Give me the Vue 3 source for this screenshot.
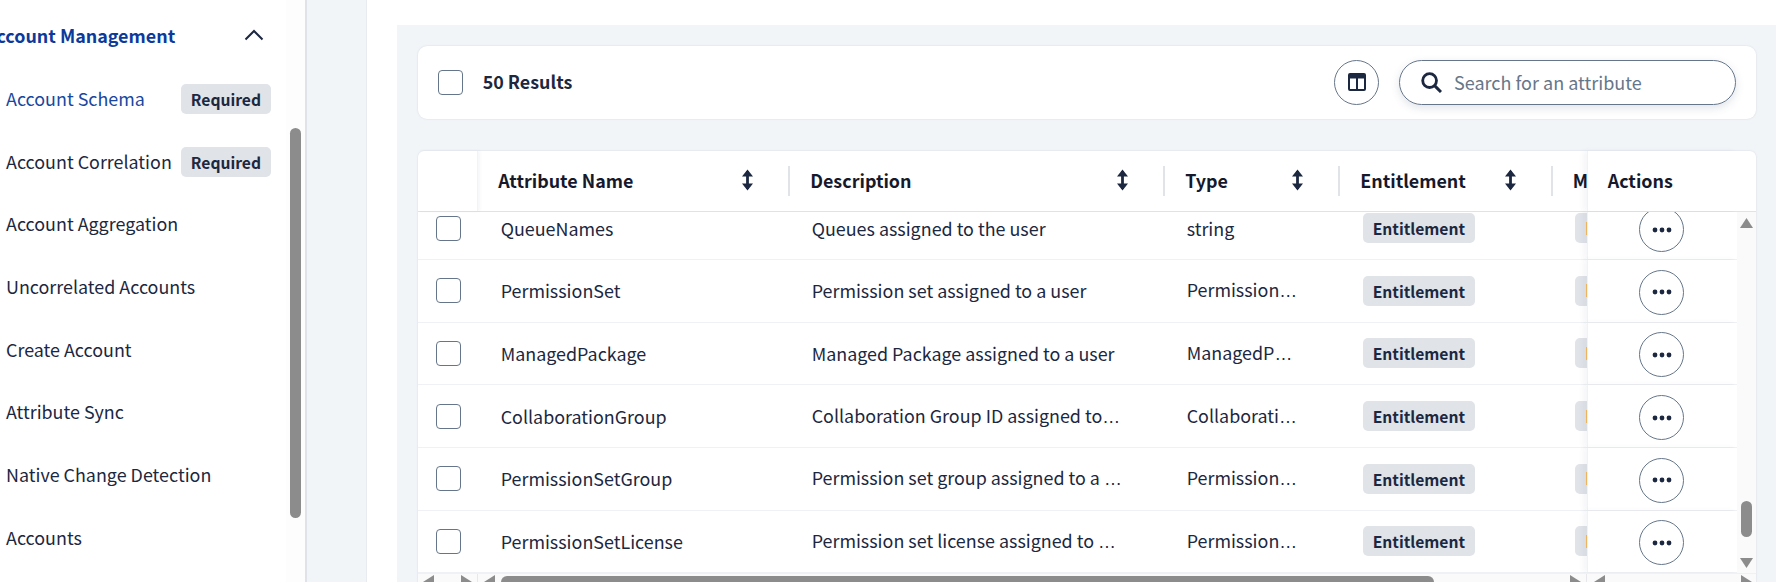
<script setup>
// Menu de la izquierda
const menuItems = [
  { name: 'Account Schema', required: true, active: true },
  { name: 'Account Correlation', required: true },
  { name: 'Account Aggregation' },
  { name: 'Uncorrelated Accounts' },
  { name: 'Create Account' },
  { name: 'Attribute Sync' },
  { name: 'Native Change Detection' },
  { name: 'Accounts' }
]

const columns = ['Attribute Name', 'Description', 'Type', 'Entitlement']

// cut = texto recortado, se pinta con puntos suspensivos
const rows = [
  { name: 'QueueNames', description: 'Queues assigned to the user', type: 'string' },
  { name: 'PermissionSet', description: 'Permission set assigned to a user', type: 'Permission', typeCut: true },
  { name: 'ManagedPackage', description: 'Managed Package assigned to a user', type: 'ManagedP', typeCut: true },
  { name: 'CollaborationGroup', description: 'Collaboration Group ID assigned to', descCut: true, type: 'Collaborati', typeCut: true },
  { name: 'PermissionSetGroup', description: 'Permission set group assigned to a ', descCut: true, type: 'Permission', typeCut: true },
  { name: 'PermissionSetLicense', description: 'Permission set license assigned to ', descCut: true, type: 'Permission', typeCut: true }
]
</script>

<template>
  <div class="page">
    <!-- Menu lateral -->
    <aside class="sidebar">
      <div class="menu">
        <div class="menu-head">
          <span class="menu-title">Account Management</span>
          <svg class="chevron" width="20" height="12" viewBox="0 0 20 12">
            <path d="M1.5 10.5 10 2l8.5 8.5" fill="none" stroke="#1c2740" stroke-width="2" />
          </svg>
        </div>
        <div
          v-for="item in menuItems"
          :key="item.name"
          class="menu-item"
          :class="{ active: item.active }"
        >
          <span>{{ item.name }}</span>
          <span v-if="item.required" class="badge menu-badge">Required</span>
        </div>
      </div>
      <div class="menu-rail">
        <div class="menu-thumb"></div>
      </div>
    </aside>

    <div class="gutter"></div>

    <main class="content">
      <div class="panel">
        <!-- Barra de resultados -->
        <div class="toolbar">
          <span class="checkbox"></span>
          <span class="results">50 Results</span>
          <button class="round-btn columns-btn">
            <svg width="18" height="18" viewBox="0 0 18 18">
              <path d="M2 1h14a1 1 0 0 1 1 1v14a1 1 0 0 1-1 1H2a1 1 0 0 1-1-1V2a1 1 0 0 1 1-1z" fill="none" stroke="#1c2740" stroke-width="2" />
              <path d="M1 1h16v4.5H1z" fill="#1c2740" />
              <path d="M9 5v12" stroke="#1c2740" stroke-width="2" />
            </svg>
          </button>
          <div class="search">
            <svg width="21" height="21" viewBox="0 0 21 21">
              <circle cx="8.6" cy="8.6" r="6.9" fill="none" stroke="#1c2740" stroke-width="2.8" />
              <path d="M13.6 13.6 20 20" stroke="#1c2740" stroke-width="3" />
            </svg>
            <span class="placeholder">Search for an attribute</span>
          </div>
        </div>

        <!-- Tabla de atributos -->
        <div class="table">
          <div class="table-row table-head">
            <div class="select-head"></div>
            <div v-for="col in columns" :key="col" class="head-cell">
              <span>{{ col }}</span>
              <svg class="sort" width="13" height="24" viewBox="0 0 13 24">
                <path d="M6.5 3v18" stroke="#1c2740" stroke-width="2.8" />
                <path d="M1 8.6 6.5 1.6 12 8.6zM1 15.4 6.5 22.4 12 15.4z" fill="#1c2740" />
              </svg>
            </div>
            <div class="head-cell cut">M</div>
            <div class="head-cell actions-head">Actions</div>
            <div class="bar-corner"></div>
          </div>

          <div class="table-main">
            <div class="table-body">
              <div v-for="row in rows" :key="row.name" class="table-row body-row">
                <div class="select-cell"><span class="checkbox"></span></div>
                <div class="cell text-cell name-cell">{{ row.name }}</div>
                <div class="cell text-cell desc-cell">{{ row.description }}<span v-if="row.descCut" class="dots">…</span></div>
                <div class="cell text-cell type-cell">{{ row.type }}<span v-if="row.typeCut" class="dots">…</span></div>
                <div class="cell ent-cell"><span class="badge">Entitlement</span></div>
                <div class="cell cut-cell"><span class="cut-badge"><i></i></span></div>
                <div class="actions-cell">
                  <button class="round-btn dots-btn">
                    <svg width="20" height="6" viewBox="0 0 20 6">
                      <circle cx="3" cy="3" r="2.4" fill="#1c2740" />
                      <circle cx="10" cy="3" r="2.4" fill="#1c2740" />
                      <circle cx="17" cy="3" r="2.4" fill="#1c2740" />
                    </svg>
                  </button>
                </div>
              </div>
            </div>
            <!-- Scroll vertical -->
            <div class="v-scroll">
              <svg class="v-up" width="13" height="10" viewBox="0 0 13 10"><path d="M6.5 0 13 10H0z" fill="#8c8c8c" /></svg>
              <div class="v-thumb"></div>
              <svg class="v-down" width="13" height="10" viewBox="0 0 13 10"><path d="M0 0h13L6.5 10z" fill="#8c8c8c" /></svg>
            </div>
          </div>

          <!-- Scroll horizontal -->
          <div class="h-scroll">
            <div class="h-part h-select">
              <svg width="11" height="14" viewBox="0 0 11 14"><path d="M11 0v14L0 7z" fill="#8c8c8c" /></svg>
              <svg width="11" height="14" viewBox="0 0 11 14"><path d="M0 0v14l11-7z" fill="#8c8c8c" /></svg>
            </div>
            <div class="h-part h-middle">
              <svg width="11" height="14" viewBox="0 0 11 14"><path d="M11 0v14L0 7z" fill="#8c8c8c" /></svg>
              <div class="h-thumb"></div>
              <svg class="h-end" width="11" height="14" viewBox="0 0 11 14"><path d="M0 0v14l11-7z" fill="#8c8c8c" /></svg>
            </div>
            <div class="h-part h-actions">
              <svg width="11" height="14" viewBox="0 0 11 14"><path d="M11 0v14L0 7z" fill="#8c8c8c" /></svg>
              <svg class="h-end" width="11" height="14" viewBox="0 0 11 14"><path d="M0 0v14l11-7z" fill="#8c8c8c" /></svg>
            </div>
          </div>
        </div>
      </div>
    </main>
  </div>
</template>

<style>
html, body {
  margin: 0;
  background: #fff;
}
</style>

<style scoped>
.page {
  display: flex;
  width: 1776px;
  height: 582px;
  overflow: hidden;
  background: #fff;
  color: #1c2740;
  font-family: "Noto Sans CJK SC", "Liberation Sans", sans-serif;
  font-size: 17.9px;
  line-height: 24px;
}

/* Menu lateral */
.sidebar {
  display: flex;
  flex: 0 0 305px;
  background: #fff;
  border-right: 2px solid #dfe2e9;
}

.menu {
  flex: 0 0 286px;
  padding-top: 4px;
}

.menu-head {
  display: flex;
  align-items: center;
  height: 62.67px;
  margin-left: -15px;
}

.menu-title {
  font-weight: 700;
  color: #0b3a9b;
  white-space: nowrap;
}

.chevron {
  margin-left: auto;
  margin-right: 22px;
}

.menu-item {
  display: flex;
  align-items: center;
  justify-content: space-between;
  height: 62.67px;
  padding: 0 15px 0 6px;
}

.menu-item.active {
  color: #18479f;
}

.badge {
  display: inline-block;
  height: 30px;
  padding: 0 10px;
  border-radius: 5px;
  background: #e0e3e8;
  color: #1c2740;
  font-size: 15.65px;
  font-weight: 700;
  line-height: 31px;
  white-space: nowrap;
}

.menu-badge {
  margin-top: 2px;
}

.menu-rail {
  flex: 1;
  background: #fdfdfd;
}

.menu-thumb {
  width: 11px;
  height: 390px;
  margin: 128px 0 0 4px;
  border-radius: 6px;
  background: #8c8c8c;
}

.gutter {
  flex: 0 0 59px;
  background: #f2f5f8;
  border-right: 1px solid #e8ebef;
}

/* Contenido */
.content {
  flex: 1;
  min-width: 0;
  padding: 25px 0 0 30px;
}

.panel {
  height: 100%;
  padding: 20.7px 20px 0 20.7px;
  background: #f2f5f8;
}

.toolbar {
  display: flex;
  align-items: center;
  height: 73.4px;
  padding: 0 20px 0 20px;
  margin-bottom: 31.6px;
  background: #fff;
  border-radius: 9px;
  box-shadow: 0 0 2px rgba(60, 80, 110, 0.18);
  box-sizing: border-box;
}

.checkbox {
  display: block;
  flex: none;
  width: 25px;
  height: 25px;
  box-sizing: border-box;
  border: 1px solid #66768a;
  border-radius: 4px;
  background: #fff;
}

.results {
  margin: -2px 0 0 20px;
  font-weight: 700;
}

.round-btn {
  display: flex;
  align-items: center;
  justify-content: center;
  width: 45px;
  height: 45px;
  padding: 0;
  background: #fff;
  border: 1px solid #66768a;
  border-radius: 50%;
  box-sizing: border-box;
}

.columns-btn {
  margin-left: auto;
}

.search {
  display: flex;
  align-items: center;
  width: 337px;
  height: 45px;
  margin-left: 20px;
  padding-left: 21px;
  box-sizing: border-box;
  border: 1px solid #66768a;
  border-radius: 23px;
  box-shadow: 0 3px 8px rgba(60, 80, 110, 0.16);
}

.placeholder {
  margin: -1px 0 0 12px;
  color: #66768a;
  font-size: 18px;
}

/* Tabla */
.table {
  background: #fff;
  border-radius: 6px 6px 0 0;
  box-shadow: 0 0 2px rgba(60, 80, 110, 0.18);
}

.table-row {
  display: grid;
  grid-template-columns: 60px 312px 375px 175px 213px 34px 150px;
}

.table-head {
  grid-template-columns: 60px 312px 375px 175px 213px 34px 150px 19px;
  height: 61px;
  box-sizing: border-box;
  border-bottom: 1px solid #dfe2e6;
  color: #15192b;
  font-weight: 700;
  align-items: center;
}

.select-head {
  height: 100%;
  border-right: 1px solid #f2f3f6;
  box-shadow: 2px 0 3px rgba(60, 80, 110, 0.05);
}

.head-cell {
  display: flex;
  align-items: center;
  height: 30px;
  padding: 0 34px 2px 20.5px;
  justify-content: space-between;
  box-sizing: border-box;
  border-right: 2px solid #e0e3e8;
}

.head-cell.cut {
  border-right: 0;
  overflow: hidden;
  padding: 0 0 2px 20px;
}

.head-cell.actions-head {
  height: 100%;
  padding-left: 20px;
  border-right: 0;
  border-left: 1px solid #f0f2f5;
  box-shadow: -4px 0 5px rgba(60, 80, 110, 0.05);
  background: #fff;
}

.table-main {
  display: flex;
  height: 361px;
}

.table-body {
  flex: 0 0 1319px;
  overflow: hidden;
}

.body-row {
  align-items: center;
  height: 62.67px;
  box-sizing: border-box;
  border-bottom: 1px solid #eff1f4;
}

.body-row:first-child {
  margin-top: -14.4px;
}

.select-cell {
  padding-left: 18px;
}

.cell {
  min-width: 0;
  padding-left: 23px;
  white-space: pre;
}

.text-cell {
  margin-top: -0.8px;
}

.desc-cell,
.type-cell {
  padding-left: 22px;
}

.dots {
  font-family: "Liberation Sans", sans-serif;
}

.cut-cell {
  padding-left: 22px;
  overflow: hidden;
}

.cut-badge {
  display: flex;
  align-items: center;
  height: 30px;
  padding-left: 11px;
  margin-right: -10px;
  border-radius: 5px 0 0 5px;
  background: #e0e3e8;
}

.cut-badge i {
  width: 2px;
  height: 13px;
  background: #f8b75c;
}

.actions-cell {
  display: flex;
  justify-content: center;
  align-items: center;
  align-self: stretch;
  padding-right: 1px;
  background: #fff;
  border-left: 1px solid #f0f2f5;
  box-shadow: -4px 0 5px rgba(60, 80, 110, 0.05);
}

.dots-btn {
  margin-top: 3px;
}

.v-scroll {
  flex: 0 0 19px;
  display: flex;
  flex-direction: column;
  align-items: center;
  padding-top: 6px;
  background: #fafafa;
  box-sizing: border-box;
}

.v-thumb {
  flex: none;
  width: 11px;
  height: 36px;
  margin-top: 273px;
  border-radius: 6px;
  background: #8c8c8c;
}

.v-down {
  margin-top: 21.5px;
}

.h-scroll {
  display: flex;
  height: 17px;
  background: #fafafa;
  border-top: 1px solid #eff1f4;
}

.h-part {
  display: flex;
  box-sizing: border-box;
  border-right: 1px solid #e6e8ec;
}

.h-select {
  flex: 0 0 60px;
  justify-content: space-between;
  padding: 1px 5px 0 5px;
}

.h-middle {
  flex: 0 0 1109px;
  padding: 1px 5px 0 6px;
}

.h-thumb {
  width: 933px;
  height: 14px;
  margin: 1px 0 0 6px;
  border-radius: 6px;
  background: #8c8c8c;
}

.h-end {
  margin-left: auto;
}

.h-actions {
  flex: 0 0 169px;
  padding: 1px 4px 0 7px;
  border-right: 0;
}
</style>
